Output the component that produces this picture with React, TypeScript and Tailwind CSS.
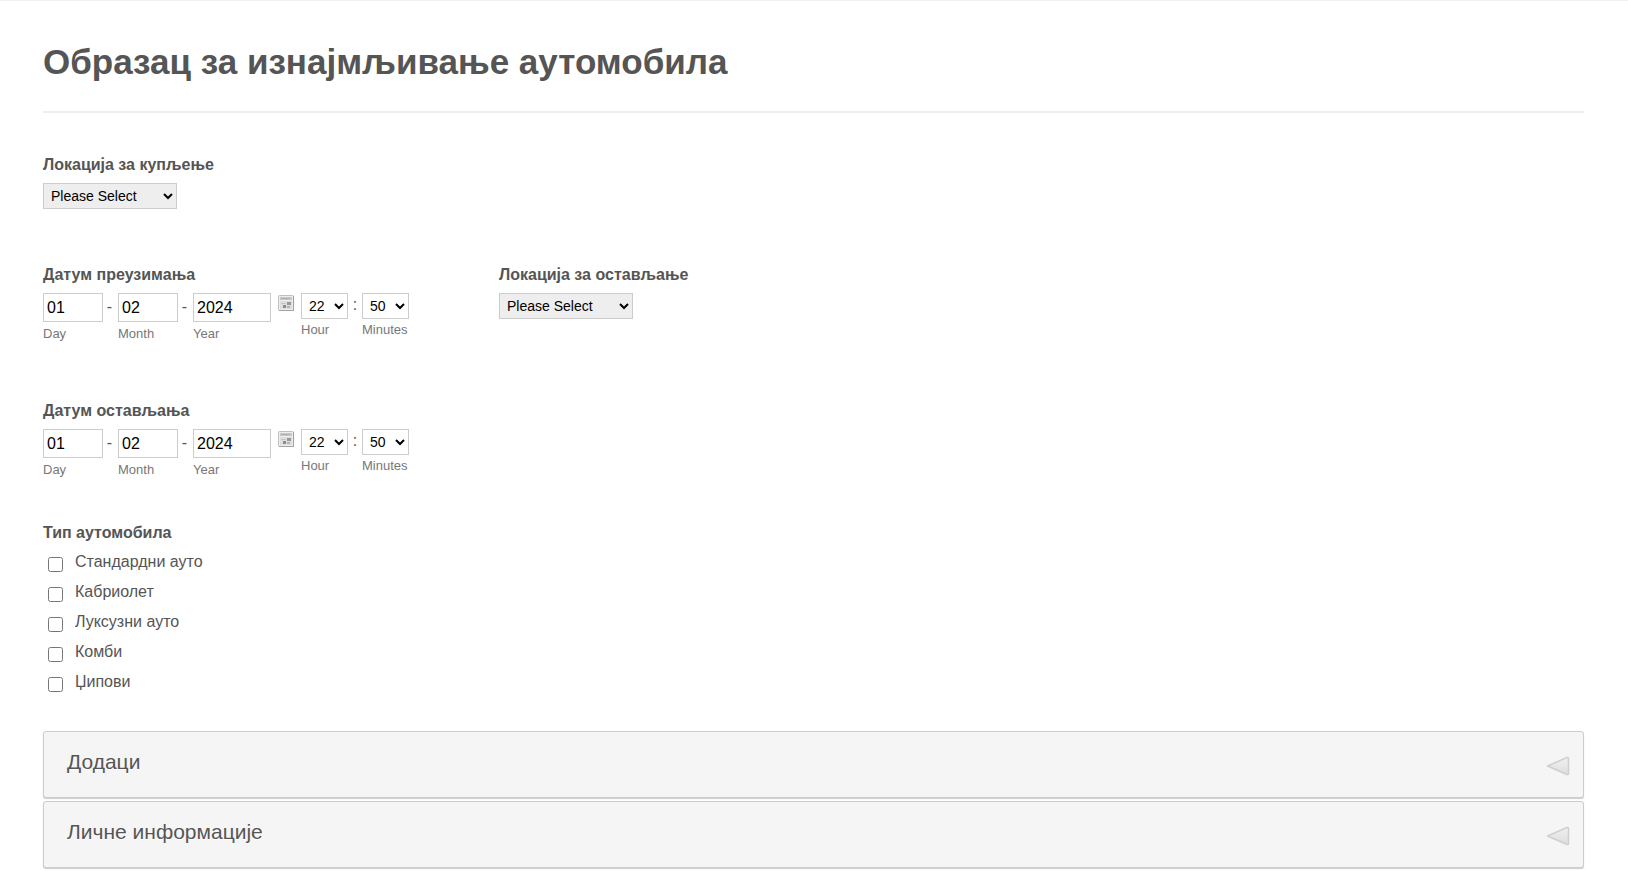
import { useState } from "react";

const carTypes = ["Стандардни ауто", "Кабриолет", "Луксузни ауто", "Комби", "Џипови"];

const sections = ["Додаци", "Личне информације"];

const CalendarIcon = () => (
  <svg width="16" height="16" viewBox="0 0 16 16" aria-hidden="true">
    <rect x="0.5" y="0.5" width="15" height="15" rx="1" fill="#ededed" stroke="#c0c0c0" />
    <path d="M15.5 1v14.5H1" fill="none" stroke="#a0a0a0" />
    <rect x="2" y="2" width="12" height="3" fill="#c8c8c8" />
    <path d="M3 3.5h9" stroke="#b0b0b0" />
    <rect x="2" y="6" width="12" height="8" fill="#dedede" />
    <rect x="9" y="7" width="4" height="3" fill="#999999" />
    <rect x="5" y="10" width="3" height="3" fill="#8c8c8c" />
    <rect x="9" y="11" width="3" height="2" fill="#b4b4b4" />
    <path d="M3 8.5h5" stroke="#c4c4c4" />
  </svg>
);

const ArrowIcon = () => (
  <svg width="24" height="20" viewBox="0 0 24 20" aria-hidden="true">
    <defs>
      <linearGradient id="arrow-fill" x1="0" y1="0" x2="0" y2="1">
        <stop offset="0" stopColor="#f0f0f0" />
        <stop offset="1" stopColor="#dddddd" />
      </linearGradient>
    </defs>
    <path
      d="M1.5 10 21 1.5Q22.5 1 22.5 2.5v15Q22.5 19 21 18.5Z"
      fill="url(#arrow-fill)"
      stroke="#cfcfcf"
      strokeWidth="1.5"
      strokeLinejoin="round"
    />
  </svg>
);

type LocationFieldProps = { id: string; label: string };

const LocationField = ({ id, label }: LocationFieldProps) => (
  <div className="flex flex-col items-start gap-1.5">
    <label htmlFor={id} className="font-bold leading-6">
      {label}
    </label>
    <select
      id={id}
      className="h-[26px] w-[134px] border border-[#cccccc] bg-[#eeeeee] px-[3px] text-sm text-black"
    >
      <option>Please Select</option>
    </select>
  </div>
);

type DateFieldProps = { id: string; label: string };

const DateField = ({ id, label }: DateFieldProps) => {
  const parts = [
    { name: "Day", value: "01", width: "w-[60px]" },
    { name: "Month", value: "02", width: "w-[60px]" },
    { name: "Year", value: "2024", width: "w-[78px]" },
  ];
  const times = [
    { name: "Hour", value: "22" },
    { name: "Minutes", value: "50" },
  ];

  return (
    <fieldset>
      <legend className="mb-1.5 font-bold leading-6">{label}</legend>
      <div className="flex items-start">
        {parts.map((part, index) => (
          <div key={part.name} className="flex items-start">
            {index > 0 && <span className="w-[15px] pr-0.5 text-center leading-7">-</span>}
            <div className="flex flex-col">
              <input
                id={`${id}-${part.name}`}
                type="text"
                defaultValue={part.value}
                className={`h-[29px] border border-[#cccccc] bg-white px-[3px] text-black ${part.width}`}
              />
              <label htmlFor={`${id}-${part.name}`} className="mt-1 text-[13px] leading-4 text-[#777777]">
                {part.name}
              </label>
            </div>
          </div>
        ))}
        <button type="button" aria-label="Calendar" className="mx-[7px] mt-0.5">
          <CalendarIcon />
        </button>
        {times.map((time, index) => (
          <div key={time.name} className="flex items-start">
            {index > 0 && <span className="w-[14px] text-center leading-6">:</span>}
            <div className="flex flex-col">
              <select
                id={`${id}-${time.name}`}
                className="h-[26px] w-[47px] border border-[#cccccc] bg-white px-[3px] text-sm text-black"
              >
                <option>{time.value}</option>
              </select>
              <label htmlFor={`${id}-${time.name}`} className="mt-[3px] text-[13px] leading-4 text-[#777777]">
                {time.name}
              </label>
            </div>
          </div>
        ))}
      </div>
    </fieldset>
  );
};

const Section = ({ title }: { title: string }) => {
  const [open, setOpen] = useState(false);

  return (
    <button
      type="button"
      aria-expanded={open}
      onClick={() => setOpen(!open)}
      className="flex h-[67px] w-full items-center justify-between rounded-[3px] border border-[#cccccc] bg-[#f5f5f5] pr-[13px] pl-[23px] text-left shadow-[0_1px_1px_#cccccc]"
    >
      <span className="pb-1.5 text-[21px] leading-7 [text-shadow:0_1px_#ffffff]">{title}</span>
      <span className="pt-0.5">
        <ArrowIcon />
      </span>
    </button>
  );
};

export default function App() {
  return (
    <form className="border-t border-[#f0f0f0] bg-white pr-11 pb-[3px] pl-[43px] font-['Liberation_Sans',Arial,sans-serif] text-base text-[#555555]">
      <header className="border-b-2 border-[#eeeeee] pt-9 pb-6">
        <h1 className="text-[35px] leading-[50px] font-bold">Образац за изнајмљивање аутомобила</h1>
      </header>

      <div className="pt-10">
        <LocationField id="pickup-location" label="Локација за купљење" />
      </div>

      <div className="mt-[54px] flex items-start gap-[90px]">
        <DateField id="pickup-date" label="Датум преузимања" />
        <LocationField id="dropoff-location" label="Локација за остављање" />
      </div>

      <div className="mt-[57px]">
        <DateField id="dropoff-date" label="Датум остављања" />
      </div>

      <fieldset className="mt-[43px]">
        <legend className="mb-[7px] font-bold leading-6">Тип аутомобила</legend>
        <div className="flex flex-col gap-[10px]">
          {carTypes.map((type) => (
            <label key={type} className="flex items-start gap-3 pl-[5px] leading-5">
              <input type="checkbox" className="mt-[5px] h-[15px] w-[15px]" />
              {type}
            </label>
          ))}
        </div>
      </fieldset>

      <div className="mt-[39px] flex flex-col gap-[3px]">
        {sections.map((title) => (
          <Section key={title} title={title} />
        ))}
      </div>
    </form>
  );
}
